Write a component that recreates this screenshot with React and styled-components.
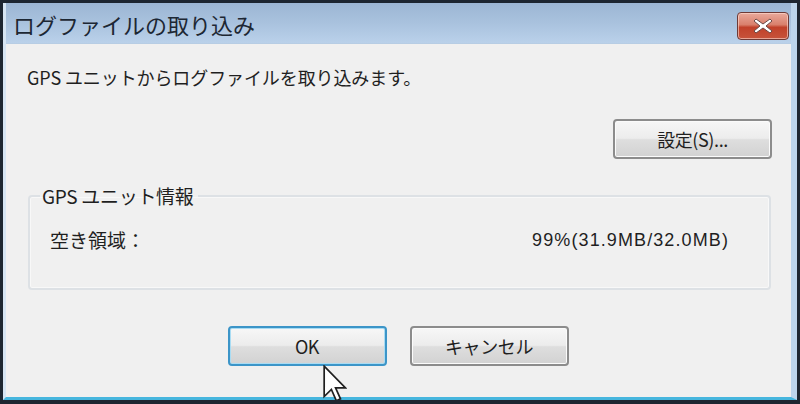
import React from 'react';
import styled, { createGlobalStyle } from 'styled-components';

const GlobalStyle = createGlobalStyle`
  html, body {
    margin: 0;
    padding: 0;
    background: #1b2430;
  }
  body {
    font-family: "Noto Sans CJK JP", "DejaVu Sans", sans-serif;
  }
`;

const Window = styled.div`
  position: relative;
  width: 800px;
  height: 404px;
  box-sizing: border-box;
  border-style: solid;
  border-color: #1d2631;
  border-width: 3px 3px 4px 3px;
  display: flex;
  flex-direction: column;
  overflow: hidden;
`;

const Frame = styled.div`
  flex: 1;
  display: flex;
  flex-direction: column;
  border-left: 3px solid #d6e5f3;
  border-right: 6px solid #bcd5ec;
  border-bottom: 3px solid #46b6de;
  background: #f0f0f0;
`;

const TitleBar = styled.div`
  height: 40px;
  display: flex;
  align-items: center;
  justify-content: space-between;
  padding: 0 0 0 7px;
  background: linear-gradient(to bottom, #9cb6d4 0%, #a9c2de 50%, #bad1ea 100%);
  border-bottom: 1px solid #b7cde4;
`;

const Title = styled.div`
  font-size: 22px;
  line-height: 26px;
  color: #1d2733;
  margin-top: 1px;
`;

const CloseButton = styled.div`
  width: 52px;
  height: 28px;
  margin-top: 5px;
  margin-right: 2px;
  box-sizing: border-box;
  border: 1.5px solid #6e3a36;
  border-radius: 4px;
  background: linear-gradient(to bottom, #e9a99b 0%, #d9806c 45%, #c1412a 55%, #c7533b 100%);
  box-shadow: inset 0 0 0 1px rgba(255, 220, 210, 0.6);
  display: flex;
  align-items: center;
  justify-content: center;
`;

const Content = styled.div`
  flex: 1;
  display: flex;
  flex-direction: column;
  padding: 21px 19px 0 21px;
  color: #1f1f1f;
`;

const Message = styled.div`
  font-size: 18px;
  line-height: 24px;
  letter-spacing: -0.1px;
`;

const SettingsRow = styled.div`
  display: flex;
  justify-content: flex-end;
  margin-top: 30px;
`;

const Button = styled.button`
  width: ${(p) => p.$width || 159}px;
  height: 40px;
  box-sizing: border-box;
  border-radius: 4px;
  border: 2px solid ${(p) => (p.$focused ? '#3c95c8' : '#8c8c8c')};
  background: linear-gradient(to bottom, #f7f7f7 0%, #ececec 48%, #dedede 52%, #d2d2d2 100%);
  box-shadow: inset 0 0 0 1px ${(p) => (p.$focused ? '#a9dcf3' : '#fbfbfb')};
  font-family: "Noto Sans CJK JP", "DejaVu Sans", sans-serif;
  font-size: 18px;
  color: #1f1f1f;
  letter-spacing: -0.4px;
  padding: 0;
  display: flex;
  align-items: center;
  justify-content: center;
`;

const GroupBox = styled.fieldset`
  margin: 25px 1px 0 1px;
  padding: 20px 22px 36px 22px;
  border: 2px solid #dde1e5;
  border-radius: 4px;
  box-shadow: inset 0 0 0 1px #f8f8f8;
`;

const Legend = styled.legend`
  font-size: 19px;
  line-height: 24px;
  letter-spacing: -0.3px;
  padding: 0 4px 0 2px;
  margin-left: -12px;
`;

const InfoRow = styled.div`
  display: flex;
  justify-content: space-between;
  font-size: 19px;
  line-height: 24px;
  letter-spacing: 0;
  padding-right: 18px;
  margin-left: -2px;
`;

const Value = styled.span`
  font-family: "Liberation Sans", "Noto Sans CJK JP", sans-serif;
  font-size: 18px;
  letter-spacing: 1.1px;
`;

const ButtonRow = styled.div`
  display: flex;
  justify-content: center;
  gap: 23px;
  margin-top: 36px;
  padding-right: 3px;
`;

const Cursor = styled.svg`
  position: absolute;
  left: 320px;
  top: 362px;
  width: 24px;
  height: 38px;
`;

export default function App() {
  return (
    <>
      <GlobalStyle />
      <Window>
        <Frame>
          <TitleBar>
            <Title>ログファイルの取り込み</Title>
            <CloseButton>
              <svg width="22" height="18" viewBox="0 0 22 18">
                <path
                  d="M4 2 L11 7 L18 2 L20 4 L14 9 L20 14 L18 16 L11 11 L4 16 L2 14 L8 9 L2 4 Z"
                  fill="#ffffff"
                  stroke="#6b4a48"
                  strokeWidth="1"
                  strokeLinejoin="round"
                />
              </svg>
            </CloseButton>
          </TitleBar>
          <Content>
            <Message>GPS ユニットからログファイルを取り込みます。</Message>
            <SettingsRow>
              <Button>設定(S)...</Button>
            </SettingsRow>
            <GroupBox>
              <Legend>GPS ユニット情報</Legend>
              <InfoRow>
                <span>空き領域：</span>
                <Value>99%(31.9MB/32.0MB)</Value>
              </InfoRow>
            </GroupBox>
            <ButtonRow>
              <Button $focused>OK</Button>
              <Button>キャンセル</Button>
            </ButtonRow>
          </Content>
        </Frame>
        <Cursor viewBox="0 0 12.6 20">
          <path
            d="M0.6 0.6 L0.6 16.6 L4.4 12.9 L7 18.8 L9.2 17.8 L6.6 12 L11.8 12 Z"
            fill="#ffffff"
            stroke="#202020"
            strokeWidth="0.9"
            strokeLinejoin="miter"
          />
        </Cursor>
      </Window>
    </>
  );
}
